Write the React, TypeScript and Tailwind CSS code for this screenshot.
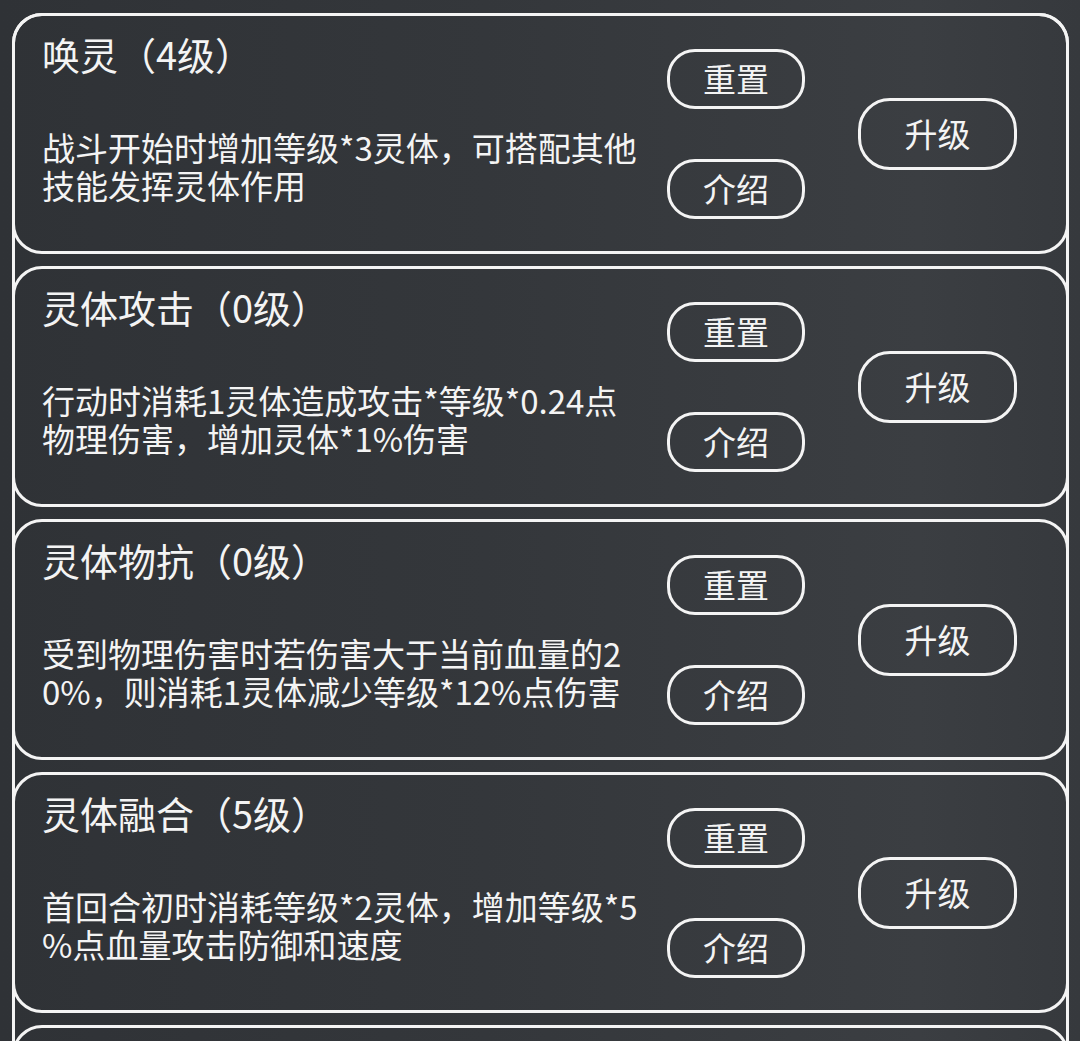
import React from "react";

interface Skill {
  id: string;
  title: string;
  lines: string[];
}

const skills: Skill[] = [
  {
    id: "summon",
    title: "唤灵（4级）",
    lines: ["战斗开始时增加等级*3灵体，可搭配其他", "技能发挥灵体作用"],
  },
  {
    id: "attack",
    title: "灵体攻击（0级）",
    lines: ["行动时消耗1灵体造成攻击*等级*0.24点", "物理伤害，增加灵体*1%伤害"],
  },
  {
    id: "defense",
    title: "灵体物抗（0级）",
    lines: ["受到物理伤害时若伤害大于当前血量的2", "0%，则消耗1灵体减少等级*12%点伤害"],
  },
  {
    id: "fusion",
    title: "灵体融合（5级）",
    lines: ["首回合初时消耗等级*2灵体，增加等级*5", "%点血量攻击防御和速度"],
  },
];

function PillButton({ label, className }: { label: string; className: string }) {
  return (
    <button
      className={`flex items-center justify-center border-[3px] border-[#f4f4f4] bg-transparent text-[33px] leading-none text-[#f4f4f4] ${className}`}
    >
      {label}
    </button>
  );
}

function SkillCard({ skill, first }: { skill: Skill; first: boolean }) {
  return (
    <div
      className={`-mx-[3px] flex h-[241px] shrink-0 items-center rounded-[30px] border-[3px] border-[#f4f4f4] ${
        first ? "-mt-[3px]" : ""
      }`}
    >
      {/* text column */}
      <div className="flex h-full min-w-0 flex-1 flex-col self-stretch pl-[27px] pt-[16px]">
        <h2 className="h-[44px] whitespace-nowrap text-[38px] font-normal leading-[44px] text-[#f4f4f4]">
          {skill.title}
        </h2>
        <div className="mt-[52px] text-[33px] leading-[38px] text-[#f4f4f4]">
          {skill.lines.map((line, i) => (
            <p key={i} className="whitespace-nowrap">
              {line}
            </p>
          ))}
        </div>
      </div>

      {/* reset / info */}
      <div className="flex w-[138px] flex-col gap-[50px]">
        <PillButton label="重置" className="h-[60px] w-[138px] rounded-[28px]" />
        <PillButton label="介绍" className="h-[60px] w-[138px] rounded-[28px]" />
      </div>

      {/* upgrade */}
      <PillButton label="升级" className="ml-[53px] mr-[49px] h-[72px] w-[159px] rounded-[32px]" />
    </div>
  );
}

export default function App() {
  return (
    <div
      className="h-[1041px] overflow-hidden bg-[linear-gradient(90deg,#2f3236_0%,#34373b_45%,#3b3e42_85%,#36393d_100%)] pl-[12px] pr-[11px] pt-[13px]"
      style={{ fontFamily: '"Noto Sans CJK SC", "Noto Sans", sans-serif' }}
    >
      <div className="flex flex-col gap-[12px] rounded-t-[30px] border-x-[3px] border-t-[3px] border-[#f4f4f4] pb-[40px]">
        {skills.map((skill, i) => (
          <SkillCard key={skill.id} skill={skill} first={i === 0} />
        ))}
        {/* next card, only its top edge is in view */}
        <div className="-mx-[3px] h-[241px] shrink-0 rounded-[30px] border-[3px] border-[#f4f4f4]" />
      </div>
    </div>
  );
}
